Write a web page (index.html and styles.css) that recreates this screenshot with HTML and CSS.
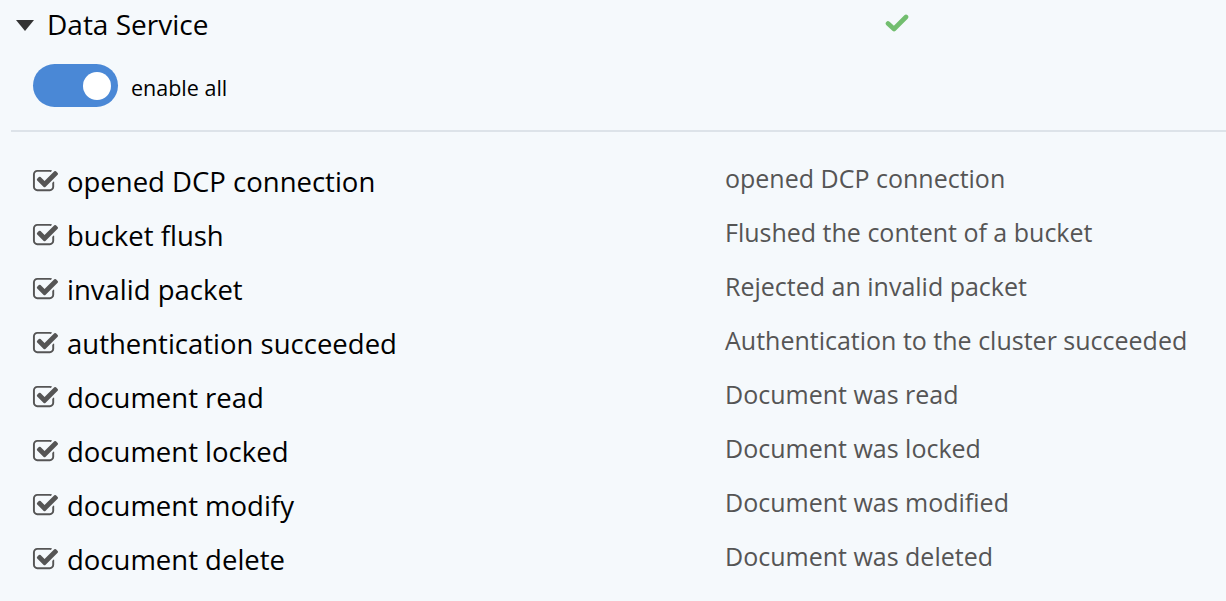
FILE: index.html
```html
<!DOCTYPE html>
<html>
<head>
<meta charset="utf-8">
<link rel="stylesheet" href="styles.css">
</head>
<body>
<div class="panel">
  <div class="header">
    <span class="caret"></span>
    <span class="title">Data Service</span>
    <svg class="ok" viewBox="0 0 24 18" width="24" height="18"><polyline points="3,9.5 9,15 21,3" fill="none" stroke="#72be6f" stroke-width="4.6" stroke-linecap="round" stroke-linejoin="round"/></svg>
  </div>
  <div class="toggle-row">
    <span class="toggle"><span class="knob"></span></span>
    <span class="toggle-label">enable all</span>
  </div>
  <div class="sep"></div>
  <div class="events">
    <div class="row"><span class="name"><svg class="cb" viewBox="0 0 1792 1792"><path d="M1472 930v318q0 119-84.5 203.5t-203.5 84.5h-832q-119 0-203.5-84.5t-84.5-203.5v-832q0-119 84.5-203.5t203.5-84.5h832q63 0 117 25 15 7 18 23 3 17-9 29l-49 49q-10 10-23 10-3 0-9-2-23-6-45-6h-832q-66 0-113 47t-47 113v832q0 66 47 113t113 47h832q66 0 113-47t47-113v-254q0-13 9-22l64-64q10-10 23-10 6 0 12 3 20 8 20 29zm231-489l-814 814q-24 24-57 24t-57-24l-430-430q-24-24-24-57t24-57l110-110q24-24 57-24t57 24l263 263 647-647q24-24 57-24t57 24l110 110q24 24 24 57t-24 57z"/></svg>opened DCP connection</span><span class="desc">opened DCP connection</span></div>
    <div class="row"><span class="name"><svg class="cb" viewBox="0 0 1792 1792"><path d="M1472 930v318q0 119-84.5 203.5t-203.5 84.5h-832q-119 0-203.5-84.5t-84.5-203.5v-832q0-119 84.5-203.5t203.5-84.5h832q63 0 117 25 15 7 18 23 3 17-9 29l-49 49q-10 10-23 10-3 0-9-2-23-6-45-6h-832q-66 0-113 47t-47 113v832q0 66 47 113t113 47h832q66 0 113-47t47-113v-254q0-13 9-22l64-64q10-10 23-10 6 0 12 3 20 8 20 29zm231-489l-814 814q-24 24-57 24t-57-24l-430-430q-24-24-24-57t24-57l110-110q24-24 57-24t57 24l263 263 647-647q24-24 57-24t57 24l110 110q24 24 24 57t-24 57z"/></svg>bucket flush</span><span class="desc">Flushed the content of a bucket</span></div>
    <div class="row"><span class="name"><svg class="cb" viewBox="0 0 1792 1792"><path d="M1472 930v318q0 119-84.5 203.5t-203.5 84.5h-832q-119 0-203.5-84.5t-84.5-203.5v-832q0-119 84.5-203.5t203.5-84.5h832q63 0 117 25 15 7 18 23 3 17-9 29l-49 49q-10 10-23 10-3 0-9-2-23-6-45-6h-832q-66 0-113 47t-47 113v832q0 66 47 113t113 47h832q66 0 113-47t47-113v-254q0-13 9-22l64-64q10-10 23-10 6 0 12 3 20 8 20 29zm231-489l-814 814q-24 24-57 24t-57-24l-430-430q-24-24-24-57t24-57l110-110q24-24 57-24t57 24l263 263 647-647q24-24 57-24t57 24l110 110q24 24 24 57t-24 57z"/></svg>invalid packet</span><span class="desc">Rejected an invalid packet</span></div>
    <div class="row"><span class="name"><svg class="cb" viewBox="0 0 1792 1792"><path d="M1472 930v318q0 119-84.5 203.5t-203.5 84.5h-832q-119 0-203.5-84.5t-84.5-203.5v-832q0-119 84.5-203.5t203.5-84.5h832q63 0 117 25 15 7 18 23 3 17-9 29l-49 49q-10 10-23 10-3 0-9-2-23-6-45-6h-832q-66 0-113 47t-47 113v832q0 66 47 113t113 47h832q66 0 113-47t47-113v-254q0-13 9-22l64-64q10-10 23-10 6 0 12 3 20 8 20 29zm231-489l-814 814q-24 24-57 24t-57-24l-430-430q-24-24-24-57t24-57l110-110q24-24 57-24t57 24l263 263 647-647q24-24 57-24t57 24l110 110q24 24 24 57t-24 57z"/></svg>authentication succeeded</span><span class="desc">Authentication to the cluster succeeded</span></div>
    <div class="row"><span class="name"><svg class="cb" viewBox="0 0 1792 1792"><path d="M1472 930v318q0 119-84.5 203.5t-203.5 84.5h-832q-119 0-203.5-84.5t-84.5-203.5v-832q0-119 84.5-203.5t203.5-84.5h832q63 0 117 25 15 7 18 23 3 17-9 29l-49 49q-10 10-23 10-3 0-9-2-23-6-45-6h-832q-66 0-113 47t-47 113v832q0 66 47 113t113 47h832q66 0 113-47t47-113v-254q0-13 9-22l64-64q10-10 23-10 6 0 12 3 20 8 20 29zm231-489l-814 814q-24 24-57 24t-57-24l-430-430q-24-24-24-57t24-57l110-110q24-24 57-24t57 24l263 263 647-647q24-24 57-24t57 24l110 110q24 24 24 57t-24 57z"/></svg>document read</span><span class="desc">Document was read</span></div>
    <div class="row"><span class="name"><svg class="cb" viewBox="0 0 1792 1792"><path d="M1472 930v318q0 119-84.5 203.5t-203.5 84.5h-832q-119 0-203.5-84.5t-84.5-203.5v-832q0-119 84.5-203.5t203.5-84.5h832q63 0 117 25 15 7 18 23 3 17-9 29l-49 49q-10 10-23 10-3 0-9-2-23-6-45-6h-832q-66 0-113 47t-47 113v832q0 66 47 113t113 47h832q66 0 113-47t47-113v-254q0-13 9-22l64-64q10-10 23-10 6 0 12 3 20 8 20 29zm231-489l-814 814q-24 24-57 24t-57-24l-430-430q-24-24-24-57t24-57l110-110q24-24 57-24t57 24l263 263 647-647q24-24 57-24t57 24l110 110q24 24 24 57t-24 57z"/></svg>document locked</span><span class="desc">Document was locked</span></div>
    <div class="row"><span class="name"><svg class="cb" viewBox="0 0 1792 1792"><path d="M1472 930v318q0 119-84.5 203.5t-203.5 84.5h-832q-119 0-203.5-84.5t-84.5-203.5v-832q0-119 84.5-203.5t203.5-84.5h832q63 0 117 25 15 7 18 23 3 17-9 29l-49 49q-10 10-23 10-3 0-9-2-23-6-45-6h-832q-66 0-113 47t-47 113v832q0 66 47 113t113 47h832q66 0 113-47t47-113v-254q0-13 9-22l64-64q10-10 23-10 6 0 12 3 20 8 20 29zm231-489l-814 814q-24 24-57 24t-57-24l-430-430q-24-24-24-57t24-57l110-110q24-24 57-24t57 24l263 263 647-647q24-24 57-24t57 24l110 110q24 24 24 57t-24 57z"/></svg>document modify</span><span class="desc">Document was modified</span></div>
    <div class="row"><span class="name"><svg class="cb" viewBox="0 0 1792 1792"><path d="M1472 930v318q0 119-84.5 203.5t-203.5 84.5h-832q-119 0-203.5-84.5t-84.5-203.5v-832q0-119 84.5-203.5t203.5-84.5h832q63 0 117 25 15 7 18 23 3 17-9 29l-49 49q-10 10-23 10-3 0-9-2-23-6-45-6h-832q-66 0-113 47t-47 113v832q0 66 47 113t113 47h832q66 0 113-47t47-113v-254q0-13 9-22l64-64q10-10 23-10 6 0 12 3 20 8 20 29zm231-489l-814 814q-24 24-57 24t-57-24l-430-430q-24-24-24-57t24-57l110-110q24-24 57-24t57 24l263 263 647-647q24-24 57-24t57 24l110 110q24 24 24 57t-24 57z"/></svg>document delete</span><span class="desc">Document was deleted</span></div>
  </div>
</div>
</body>
</html>
```

FILE: styles.css
```css
html, body {
  margin: 0;
  padding: 0;
  background: #f5f9fc;
}
body {
  font-family: "Open Sans", "Noto Sans", sans-serif;
  color: #000;
  width: 1226px;
  height: 601px;
  overflow: hidden;
}
.panel {
  padding-left: 11px;
}
.header {
  display: flex;
  align-items: center;
  height: 48px;
  padding-left: 5px;
}
.caret {
  width: 0;
  height: 0;
  border-left: 9.5px solid transparent;
  border-right: 9.5px solid transparent;
  border-top: 11px solid #333;
  margin-top: 2px;
}
.title {
  font-size: 28px;
  margin-left: 13px;
  width: 838px;
  line-height: 48px;
}
.ok {
  display: block;
  margin-top: -3px;
}
.toggle-row {
  display: flex;
  align-items: center;
  padding-left: 22px;
  margin-top: 16px;
}
.toggle {
  width: 85px;
  height: 43px;
  border-radius: 22px;
  background: #4a88d6;
  display: flex;
  align-items: center;
  justify-content: flex-end;
  padding-right: 7px;
  box-sizing: border-box;
}
.knob {
  width: 28px;
  height: 28px;
  border-radius: 50%;
  background: #fff;
}
.toggle-label {
  font-size: 21.5px;
  margin-left: 13px;
  margin-top: 3px;
}
.sep {
  margin-top: 23px;
  border-top: 2px solid #dde3e9;
}
.events {
  padding-top: 22px;
}
.row {
  display: grid;
  grid-template-columns: 714px 1fr;
  height: 54px;
  align-items: center;
}
.name {
  display: flex;
  align-items: center;
  padding-left: 21px;
  font-size: 27.5px;
}
.cb {
  width: 27px;
  height: 27px;
  fill: #555;
  margin-right: 8px;
}
.desc {
  font-size: 25px;
  color: #555;
  margin-top: -6px;
}
```
